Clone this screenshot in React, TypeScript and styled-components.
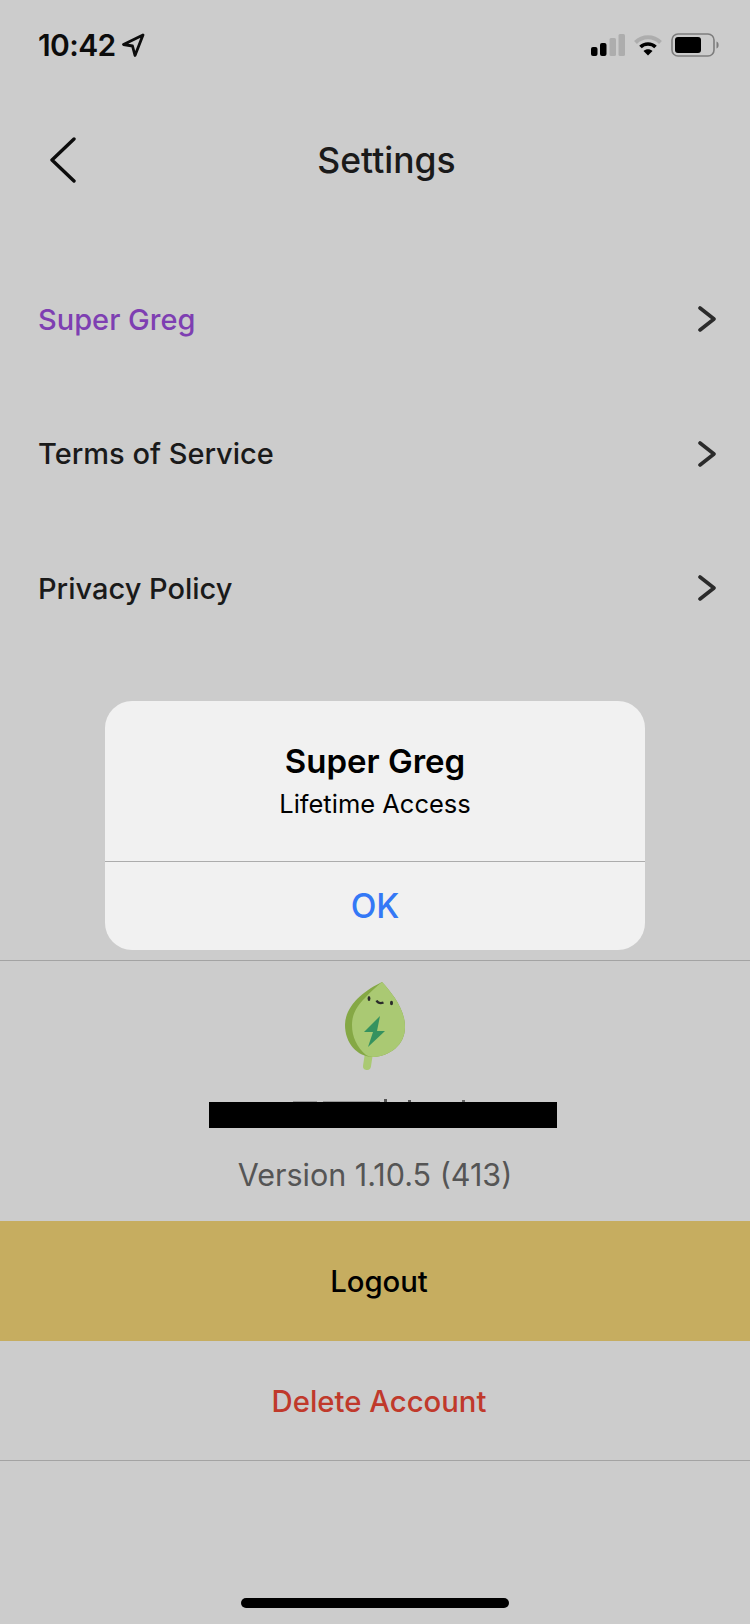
import styled, { createGlobalStyle } from "styled-components";

const menuItems = [
  { title: "Super Greg", accent: true },
  { title: "Terms of Service", accent: false },
  { title: "Privacy Policy", accent: false },
];

const GlobalStyle = createGlobalStyle`
  html, body {
    margin: 0;
    padding: 0;
    background: #cccccc;
  }
  body {
    font-family: Inter, "Noto Sans", sans-serif;
  }
`;

const Page = styled.div`
  position: relative;
  display: flex;
  flex-direction: column;
  width: 750px;
  height: 1624px;
  overflow: hidden;
  background: #cccccc;
  color: #1a1a1a;
`;

const StatusBar = styled.div`
  display: flex;
  align-items: center;
  justify-content: space-between;
  height: 90px;
  padding: 0 31px 0 38px;
  box-sizing: border-box;
`;

const TimeGroup = styled.div`
  display: flex;
  align-items: center;
  gap: 5px;
  color: #0c0c0c;
`;

const Time = styled.span`
  font-size: 30px;
  font-weight: 600;
  letter-spacing: -0.6px;
`;

const StatusIcons = styled.div`
  display: flex;
  align-items: center;
  gap: 9px;
`;

const Header = styled.header`
  position: relative;
  display: flex;
  align-items: center;
  justify-content: center;
  height: 140px;
  padding-left: 23px;
  font-size: 35.5px;
  font-weight: 450;
`;

const BackButton = styled.div`
  position: absolute;
  left: 49px;
  top: 47px;
  display: flex;
`;

const Menu = styled.nav`
  display: flex;
  flex-direction: column;
  margin-top: 22px;
`;

const MenuRow = styled.div`
  display: flex;
  align-items: center;
  justify-content: space-between;
  height: 134.5px;
  padding: 0 33px 0 38px;
`;

const MenuLabel = styled.span<{ $accent: boolean }>`
  font-size: 29px;
  font-weight: 450;
  color: ${({ $accent }) => ($accent ? "#7e3fb2" : "#1a1a1a")};
`;

const Account = styled.section`
  display: flex;
  flex-direction: column;
  align-items: center;
  margin-top: 304px;
  border-top: 1px solid #a3a3a3;
  height: 261px;
  box-sizing: border-box;
`;

const Redaction = styled.div`
  position: relative;
  width: 348px;
  height: 26px;
  margin-top: 27px;
  margin-left: 16px;
  background: #000;
`;

const HiddenTextTops = styled.svg`
  position: absolute;
  left: 0;
  top: -3px;
`;

const Version = styled.div`
  margin-top: 28px;
  font-size: 30.5px;
  font-weight: 400;
  color: #555555;
`;

const ActionButton = styled.div<{ $variant: "primary" | "danger" }>`
  display: flex;
  align-items: center;
  justify-content: center;
  height: 120px;
  padding: 2px 0 0 8px;
  box-sizing: border-box;
  font-size: 29.3px;
  font-weight: 450;
  background: ${({ $variant }) => ($variant === "primary" ? "#c6ad60" : "transparent")};
  color: ${({ $variant }) => ($variant === "primary" ? "#000" : "#c0392b")};
  border-bottom: ${({ $variant }) => ($variant === "danger" ? "1px solid #a3a3a3" : "none")};
`;

const HomeIndicator = styled.div`
  position: absolute;
  left: 241px;
  bottom: 16px;
  width: 268px;
  height: 10px;
  border-radius: 5px;
  background: #000;
`;

const Dialog = styled.div`
  position: absolute;
  left: 105px;
  top: 701px;
  width: 540px;
  height: 249px;
  display: flex;
  flex-direction: column;
  border-radius: 27px;
  background: #f1f1f1;
  overflow: hidden;
`;

const DialogBody = styled.div`
  display: flex;
  flex-direction: column;
  align-items: center;
  height: 161px;
  padding-top: 40px;
  box-sizing: border-box;
  border-bottom: 1px solid #acacac;
  color: #000;
`;

const DialogTitle = styled.div`
  font-size: 33px;
  font-weight: 600;
  line-height: 40px;
`;

const DialogMessage = styled.div`
  margin-top: 3px;
  font-size: 25.5px;
  line-height: 40px;
`;

const DialogAction = styled.div`
  flex: 1;
  display: flex;
  align-items: center;
  justify-content: center;
  font-size: 33.5px;
  font-weight: 500;
  color: #3478f6;
`;

const LogoWrap = styled.div`
  display: flex;
  margin-top: 14px;
`;

const LocationArrow = () => (
  <svg width="24" height="24" viewBox="0 0 24 24" fill="none">
    <path d="M22 2 2.5 11.5 11.5 13 14 22.5Z" stroke="#0c0c0c" strokeWidth="2.8" strokeLinejoin="round" />
  </svg>
);

const SignalIcon = () => (
  <svg width="34" height="22" viewBox="0 0 34 22">
    <rect x="0" y="13" width="6.5" height="9" rx="2" fill="#000" />
    <rect x="9" y="9" width="6.5" height="13" rx="2" fill="#000" />
    <rect x="18.5" y="4" width="6.5" height="18" rx="1.5" fill="#adadad" />
    <rect x="27.5" y="0" width="6.5" height="22" rx="1.5" fill="#adadad" />
  </svg>
);

const WifiIcon = () => (
  <svg width="28" height="22" viewBox="0 0 28 22" fill="none">
    <path d="M1.5 8.5C8.5 1.5 19.5 1.5 26.5 8.5" stroke="#adadad" strokeWidth="4" />
    <path d="M6.5 13C10.5 9 17.5 9 21.5 13" stroke="#000" strokeWidth="3.6" />
    <path d="M14 21.5 9.5 17C12 14.5 16 14.5 18.5 17Z" fill="#000" />
  </svg>
);

const BatteryIcon = () => (
  <svg width="48" height="24" viewBox="0 0 48 24" fill="none">
    <rect x="1" y="1" width="42" height="22" rx="6" stroke="#7d7d7d" strokeWidth="1.6" />
    <rect x="4" y="4" width="26" height="16" rx="3" fill="#000" />
    <path d="M45.5 8.5C47 9 47.6 10.4 47.6 12S47 15 45.5 15.5Z" fill="#7d7d7d" />
  </svg>
);

const BackChevron = () => (
  <svg width="28" height="46" viewBox="0 0 28 46" fill="none">
    <path d="M25 2 3 23 25 44" stroke="#0c0c0c" strokeWidth="3.4" strokeLinecap="round" strokeLinejoin="round" />
  </svg>
);

const RowChevron = () => (
  <svg width="20" height="26" viewBox="0 0 20 26" fill="none">
    <path d="M3 2 17 13 3 24" stroke="#2b2b2b" strokeWidth="3.6" strokeLinecap="round" strokeLinejoin="round" />
  </svg>
);

const LeafLogo = () => (
  <svg width="90" height="100" viewBox="0 0 90 100" fill="none">
    <path d="M39 78 37 91" stroke="#aac973" strokeWidth="8" strokeLinecap="round" />
    <path d="M52 7C62 18 75 34 75 52 75 70 60 81 43 82 27 82 15 68 15 50 15 30 35 15 52 7Z" fill="#85a845" />
    <path
      d="M52 7C62 18 75 34 75 52 75 70 60 81 43 82 41 82 38 81 36 80 27 72 22 62 22 50 22 38 28 30 35 23 40 17 46 12 52 7Z"
      fill="#aac973"
    />
    <path d="M50 41 34 57H43L38 72 55 56H47Z" fill="#35925f" />
    <ellipse cx="39" cy="23.5" rx="1.4" ry="2.6" fill="#2b2b2b" />
    <ellipse cx="61.5" cy="28" rx="1.5" ry="2.2" fill="#2b2b2b" />
    <path d="M46.5 25.5C48 28 51 28.5 53.5 27.5" stroke="#2b2b2b" strokeWidth="2.4" />
  </svg>
);

export default function App() {
  return (
    <Page>
      <GlobalStyle />
      <StatusBar>
        <TimeGroup>
          <Time>10:42</Time>
          <LocationArrow />
        </TimeGroup>
        <StatusIcons>
          <SignalIcon />
          <WifiIcon />
          <BatteryIcon />
        </StatusIcons>
      </StatusBar>

      <Header>
        <BackButton>
          <BackChevron />
        </BackButton>
        Settings
      </Header>

      <Menu>
        {menuItems.map(({ title, accent }) => (
          <MenuRow key={title}>
            <MenuLabel $accent={accent}>{title}</MenuLabel>
            <RowChevron />
          </MenuRow>
        ))}
      </Menu>

      <Account>
        <LogoWrap>
          <LeafLogo />
        </LogoWrap>
        <Redaction>
          <HiddenTextTops width="348" height="3" viewBox="0 0 348 3">
            <rect x="175" y="0" width="3" height="3" fill="#555" />
            <rect x="199" y="1" width="3" height="2" fill="#555" />
            <rect x="253" y="1" width="3" height="2" fill="#666" />
            <rect x="84" y="2" width="24" height="1" fill="#999" />
            <rect x="114" y="2" width="57" height="1" fill="#999" />
          </HiddenTextTops>
        </Redaction>
        <Version>Version 1.10.5 (413)</Version>
      </Account>

      <ActionButton $variant="primary">Logout</ActionButton>
      <ActionButton $variant="danger">Delete Account</ActionButton>

      <HomeIndicator />

      <Dialog>
        <DialogBody>
          <DialogTitle>Super Greg</DialogTitle>
          <DialogMessage>Lifetime Access</DialogMessage>
        </DialogBody>
        <DialogAction>OK</DialogAction>
      </Dialog>
    </Page>
  );
}
